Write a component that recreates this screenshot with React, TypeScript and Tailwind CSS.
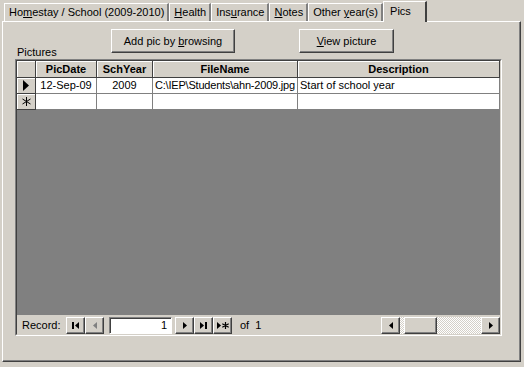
import React from "react";

const raised =
  "border border-t-white border-l-white border-r-[#404040] border-b-[#404040] shadow-[inset_-1px_-1px_0_#808080]";

const Tri = ({ dir = "r", color = "#000" }: { dir?: "r" | "l"; color?: string }) => (
  <svg width="4" height="7" viewBox="0 0 4 7">
    {dir === "r" ? (
      <path d="M0 0 L4 3.5 L0 7 Z" fill={color} />
    ) : (
      <path d="M4 0 L0 3.5 L4 7 Z" fill={color} />
    )}
  </svg>
);

const NavBtn = ({ children }: { children: React.ReactNode }) => (
  <div className={`w-[19px] h-[17px] bg-[#d4d0c8] flex items-center justify-center gap-[1px] ${raised}`}>
    {children}
  </div>
);

const Bar = () => <div className="w-[2px] h-[7px] bg-black" />;

const Tab = ({ children, first }: { children: React.ReactNode; first?: boolean }) => (
  <div
    className={`h-[18px] pl-[4px] pr-[3px] flex items-center border-t border-l border-white border-r-2 border-r-[#808080] ${first ? "ml-[4px]" : ""}`}
  >
    <span className="whitespace-pre">{children}</span>
  </div>
);

const U = ({ children }: { children: React.ReactNode }) => <span className="underline underline-offset-[1px]">{children}</span>;

const head = "h-[17px] flex items-center justify-center font-bold border-r border-b border-[#404040] bg-[#d4d0c8] shadow-[inset_1px_1px_0_#fff]";
const cell = "h-[16px] flex items-center border-r border-b border-[#808080] bg-white";

export default function App() {
  return (
    <div
      className="w-[524px] h-[367px] bg-[#d4d0c8] overflow-hidden text-[11px] text-black leading-none"
      style={{ fontFamily: '"Liberation Sans", Arial, sans-serif' }}
    >
      {/* tabs */}
      <div className="flex items-end h-[21px] relative z-10">
        <Tab first>
          Ho<U>m</U>estay / School (2009-2010)
        </Tab>
        <Tab>
          <U>H</U>ealth
        </Tab>
        <Tab>
          Ins<U>u</U>rance
        </Tab>
        <Tab>
          <U>N</U>otes
        </Tab>
        <Tab>
          Other <U>y</U>ear(s)
        </Tab>
        <div className="h-[21px] w-[44px] pl-[6px] pt-[4px] bg-[#d4d0c8] border-t border-l border-white border-r-2 border-r-[#404040] -mb-[1px]">
          Pics
        </div>
      </div>

      {/* pane */}
      <div className="ml-[2px] w-[519px] h-[341px] border border-t-white border-l-white border-r-[#404040] border-b-[#404040] shadow-[inset_-1px_-1px_0_#808080] flex flex-col">
        <div className="flex items-start pt-[7px]">
          <div className="mt-[18px] ml-[14px] w-[94px]">Pictures</div>
          <div className={`w-[124px] h-[24px] flex items-center justify-center ${raised}`}>
            <span className="whitespace-pre">
              Add pic by <U>b</U>rowsing
            </span>
          </div>
          <div className={`ml-[64px] w-[95px] h-[24px] flex items-center justify-center ${raised}`}>
            <span>
              <U>V</U>iew picture
            </span>
          </div>
        </div>

        {/* datasheet */}
        <div className="ml-[12px] mt-[1px] w-[487px] h-[277px] border border-t-[#808080] border-l-[#808080] border-r-white border-b-white">
          <div className="w-full h-full border border-t-[#404040] border-l-[#404040] border-r-[#d4d0c8] border-b-[#d4d0c8] flex flex-col bg-[#808080]">
            <div className="flex">
              <div className={`${head} w-[19px]`} />
              <div className={`${head} w-[61px]`}>PicDate</div>
              <div className={`${head} w-[56px]`}>SchYear</div>
              <div className={`${head} w-[145px]`}>FileName</div>
              <div className={`${head} flex-1`}>Description</div>
            </div>
            <div className="flex">
              <div className="w-[19px] h-[16px] flex items-center justify-center bg-[#d4d0c8] border-r border-b border-[#404040] shadow-[inset_1px_1px_0_#fff]">
                <svg width="6" height="11" viewBox="0 0 6 11">
                  <path d="M0 0 L6 5.5 L0 11 Z" fill="#000" />
                </svg>
              </div>
              <div className={`${cell} w-[61px] justify-center`}>12-Sep-09</div>
              <div className={`${cell} w-[56px] justify-center`}>2009</div>
              <div className={`${cell} w-[145px] pl-[2px] tracking-[-0.2px]`}>C:\IEP\Students\ahn-2009.jpg</div>
              <div className={`${cell} flex-1 pl-[2px]`}>Start of school year</div>
            </div>
            <div className="flex">
              <div className="w-[19px] h-[16px] flex items-center justify-center bg-[#d4d0c8] border-r border-b border-[#404040] shadow-[inset_1px_1px_0_#fff]">
                <svg width="9" height="9" viewBox="0 0 9 9" stroke="#000" strokeWidth="1">
                  <path d="M4.5 0 V9 M0.5 2 L8.5 7 M0.5 7 L8.5 2" />
                </svg>
              </div>
              <div className={`${cell} w-[61px]`} />
              <div className={`${cell} w-[56px]`} />
              <div className={`${cell} w-[145px]`} />
              <div className={`${cell} flex-1`} />
            </div>
            <div className="flex-1" />

            {/* nav bar */}
            <div className="h-[19px] bg-[#d4d0c8] flex items-center border-t border-[#d4d0c8]">
              <span className="ml-[5px] w-[44px]">Record:</span>
              <NavBtn>
                <Bar />
                <Tri dir="l" />
              </NavBtn>
              <NavBtn>
                <Tri dir="l" color="#808080" />
              </NavBtn>
              <div className="ml-[5px] w-[63px] h-[17px] bg-white border border-t-[#808080] border-l-[#808080] border-r-white border-b-white shadow-[inset_1px_1px_0_#404040] flex items-center justify-end pr-[4px]">
                1
              </div>
              <div className="ml-[3px] flex">
                <NavBtn>
                  <Tri />
                </NavBtn>
                <NavBtn>
                  <Tri />
                  <Bar />
                </NavBtn>
                <NavBtn>
                  <Tri />
                  <svg width="7" height="7" viewBox="0 0 7 7" stroke="#000" strokeWidth="1.2">
                    <path d="M3.5 0 V7 M0.3 1.7 L6.7 5.3 M0.3 5.3 L6.7 1.7" />
                  </svg>
                </NavBtn>
              </div>
              <span className="ml-[8px] whitespace-pre">of  1</span>
              <div className="ml-auto flex h-[17px]">
                <NavBtn>
                  <Tri dir="l" />
                </NavBtn>
                <div className="w-[81px] h-[17px] flex bg-[repeating-conic-gradient(#d4d0c8_0_25%,#fff_0_50%)] bg-[length:2px_2px]">
                  <div className={`ml-[4px] w-[33px] h-[17px] bg-[#d4d0c8] ${raised}`} />
                </div>
                <NavBtn>
                  <Tri />
                </NavBtn>
              </div>
            </div>
          </div>
        </div>
      </div>
    </div>
  );
}
